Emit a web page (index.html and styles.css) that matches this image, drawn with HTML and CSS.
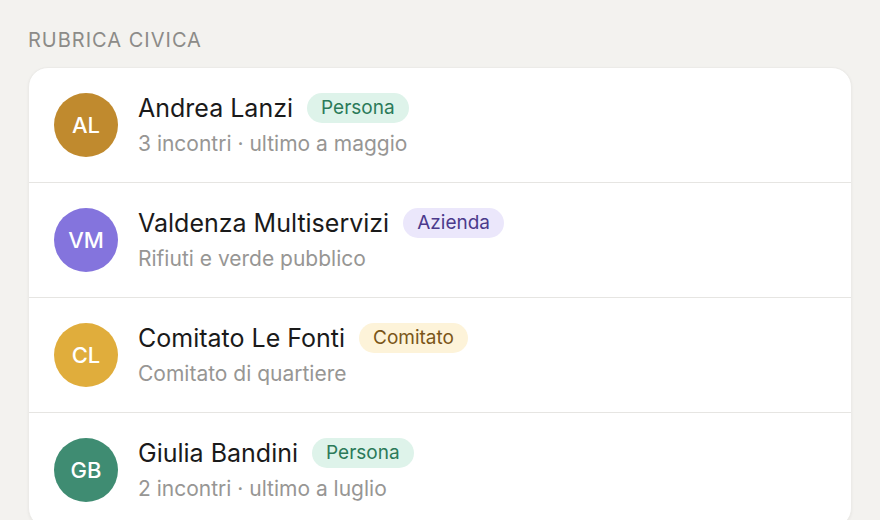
FILE: index.html
```html
<!DOCTYPE html>
<html lang="it">
<head>
  <meta charset="UTF-8" />
  <title>Rubrica civica</title>
  <link rel="stylesheet" href="styles.css">
</head>
<body>
  <h2 class="section-title">RUBRICA CIVICA</h2>
  <div class="card">
    <div class="contact">
      <div class="avatar av-gold">AL</div>
      <div class="info">
        <div class="name-row">
          <span class="name">Andrea Lanzi</span>
          <span class="badge badge-persona">Persona</span>
        </div>
        <div class="sub">3 incontri · ultimo a maggio</div>
      </div>
    </div>
    <div class="contact">
      <div class="avatar av-violet">VM</div>
      <div class="info">
        <div class="name-row">
          <span class="name">Valdenza Multiservizi</span>
          <span class="badge badge-azienda">Azienda</span>
        </div>
        <div class="sub">Rifiuti e verde pubblico</div>
      </div>
    </div>
    <div class="contact">
      <div class="avatar av-yellow">CL</div>
      <div class="info">
        <div class="name-row">
          <span class="name">Comitato Le Fonti</span>
          <span class="badge badge-comitato">Comitato</span>
        </div>
        <div class="sub">Comitato di quartiere</div>
      </div>
    </div>
    <div class="contact">
      <div class="avatar av-green">GB</div>
      <div class="info">
        <div class="name-row">
          <span class="name">Giulia Bandini</span>
          <span class="badge badge-persona">Persona</span>
        </div>
        <div class="sub">2 incontri · ultimo a luglio</div>
      </div>
    </div>
  </div>
</body>
</html>
```

FILE: styles.css
```css
body {
  margin: 0;
  padding: 28px 28px 0;
  background: #f3f2ef;
  font-family: Inter, "Noto Sans", sans-serif;
  color: #1a1a1a;
}

.section-title {
  margin: 0 0 15px;
  font-size: 20px;
  font-weight: 400;
  letter-spacing: 1px;
  line-height: 24px;
  color: #8c8b88;
}

.card {
  background: #fff;
  border-radius: 20px;
  box-shadow: 0 1px 3px rgba(0,0,0,0.05);
  border: 1px solid #ecebe8;
  overflow: hidden;
}

.contact {
  display: flex;
  align-items: center;
  gap: 20px;
  padding: 25px 25px;
  border-bottom: 1px solid #e6e5e2;
}

.contact:last-child {
  border-bottom: none;
}

.avatar {
  width: 64px;
  height: 64px;
  border-radius: 50%;
  flex-shrink: 0;
  display: flex;
  align-items: center;
  justify-content: center;
  color: #fff;
  font-size: 22px;
  font-weight: 500;
}

.av-gold { background: #c08a2e; }
.av-violet { background: #8474dd; }
.av-yellow { background: #e0ad3c; }
.av-green { background: #3f8c72; }

.info {
  display: flex;
  flex-direction: column;
  gap: 8px;
}

.name-row {
  display: flex;
  align-items: center;
  gap: 14px;
}

.name {
  font-size: 25px;
  line-height: 30px;
}

.sub {
  font-size: 21px;
  line-height: 26px;
  color: #979694;
}

.badge {
  font-size: 19px;
  line-height: 30px;
  padding: 0 14px;
  border-radius: 15px;
}

.badge-persona {
  background: #def3ea;
  color: #2b7a59;
}

.badge-azienda {
  background: #ebe7fb;
  color: #4b3a8c;
}

.badge-comitato {
  background: #fdf3d9;
  color: #7a5618;
}
```
